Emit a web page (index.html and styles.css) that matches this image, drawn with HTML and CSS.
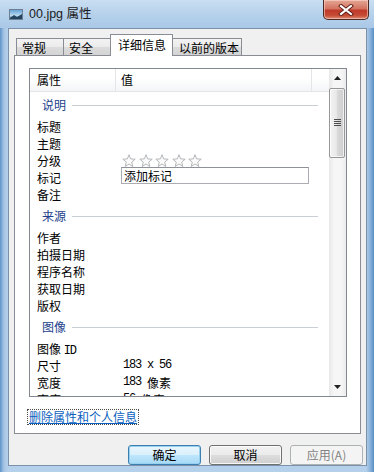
FILE: index.html
```html
<!DOCTYPE html>
<html lang="zh-CN">
<head>
<meta charset="utf-8">
<title>00.jpg 属性</title>
<link rel="stylesheet" href="styles.css">
</head>
<body>
<div class="window">
  <div class="titlebar">
    <svg class="appicon" width="14" height="11" viewBox="0 0 14 11">
      <defs>
        <linearGradient id="sky" x1="0" y1="0" x2="0" y2="1">
          <stop offset="0" stop-color="#5e9fd6"/>
          <stop offset="0.6" stop-color="#b9d9f0"/>
          <stop offset="1" stop-color="#2f5a7e"/>
        </linearGradient>
      </defs>
      <rect x="0.5" y="0.5" width="13" height="10" fill="url(#sky)" stroke="#6d7f90"/>
      <path d="M1 9 L5 6 L8 8 L13 5 L13 10 L1 10 Z" fill="#24455f"/>
    </svg>
    <span class="title">00.jpg 属性</span>
    <div class="close">
      <svg width="16" height="12" viewBox="0 0 16 12">
        <path d="M3 2 L13 10 M13 2 L3 10" stroke="#5a1a12" stroke-width="4" stroke-linecap="square"/>
        <path d="M3 2 L13 10 M13 2 L3 10" stroke="#ffffff" stroke-width="2.2" stroke-linecap="square"/>
      </svg>
    </div>
  </div>
  <div class="client">
    <div class="tabs">
      <div class="tab t1">常规</div>
      <div class="tab t2">安全</div>
      <div class="tab t3 active">详细信息</div>
      <div class="tab t4">以前的版本</div>
    </div>
    <div class="panel">
      <div class="list">
        <div class="list-body">
          <div class="header">
            <div class="hcol c1">属性</div>
            <div class="hcol c2">值</div>
            <div class="hcol c3"></div>
          </div>
          <div class="group"><span>说明</span><i></i></div>
          <div class="row"><div class="k">标题</div><div class="v"></div></div>
          <div class="row"><div class="k">主题</div><div class="v"></div></div>
          <div class="row"><div class="k">分级</div><div class="v stars">
            <svg class="star" width="14" height="13" viewBox="0 0 14 13"><polygon points="7,0.7 8.6,4.9 13.2,5.2 9.7,8.1 10.8,12.5 7,10 3.2,12.5 4.3,8.1 0.8,5.2 5.4,4.9"/></svg>
            <svg class="star" width="14" height="13" viewBox="0 0 14 13"><polygon points="7,0.7 8.6,4.9 13.2,5.2 9.7,8.1 10.8,12.5 7,10 3.2,12.5 4.3,8.1 0.8,5.2 5.4,4.9"/></svg>
            <svg class="star" width="14" height="13" viewBox="0 0 14 13"><polygon points="7,0.7 8.6,4.9 13.2,5.2 9.7,8.1 10.8,12.5 7,10 3.2,12.5 4.3,8.1 0.8,5.2 5.4,4.9"/></svg>
            <svg class="star" width="14" height="13" viewBox="0 0 14 13"><polygon points="7,0.7 8.6,4.9 13.2,5.2 9.7,8.1 10.8,12.5 7,10 3.2,12.5 4.3,8.1 0.8,5.2 5.4,4.9"/></svg>
            <svg class="star" width="14" height="13" viewBox="0 0 14 13"><polygon points="7,0.7 8.6,4.9 13.2,5.2 9.7,8.1 10.8,12.5 7,10 3.2,12.5 4.3,8.1 0.8,5.2 5.4,4.9"/></svg>
          </div></div>
          <div class="row"><div class="k">标记</div><div class="v edit">添加标记</div></div>
          <div class="row"><div class="k">备注</div><div class="v"></div></div>
          <div class="group"><span>来源</span><i></i></div>
          <div class="row"><div class="k">作者</div><div class="v"></div></div>
          <div class="row"><div class="k">拍摄日期</div><div class="v"></div></div>
          <div class="row"><div class="k">程序名称</div><div class="v"></div></div>
          <div class="row"><div class="k">获取日期</div><div class="v"></div></div>
          <div class="row"><div class="k">版权</div><div class="v"></div></div>
          <div class="group"><span>图像</span><i></i></div>
          <div class="row"><div class="k">图像 <span class="mono">ID</span></div><div class="v"></div></div>
          <div class="row"><div class="k">尺寸</div><div class="v"><span class="mono">183 x 56</span></div></div>
          <div class="row"><div class="k">宽度</div><div class="v"><span class="mono">183 </span>像素</div></div>
          <div class="row"><div class="k">高度</div><div class="v"><span class="mono">56 </span>像素</div></div>
        </div>
        <div class="scrollbar">
          <div class="sb-btn"><svg width="7" height="4" viewBox="0 0 7 4"><path d="M3.5 0 L7 4 L0 4 Z" fill="#222"/></svg></div>
          <div class="thumb"><span class="grip"></span></div>
          <div class="track"></div>
          <div class="sb-btn"><svg width="7" height="4" viewBox="0 0 7 4"><path d="M0 0 L7 0 L3.5 4 Z" fill="#222"/></svg></div>
        </div>
      </div>
      <div class="linkline"><a class="link" href="#">删除属性和个人信息</a></div>
    </div>
    <div class="buttons">
      <button class="btn default">确定</button>
      <button class="btn">取消</button>
      <button class="btn disabled">应用(A)</button>
    </div>
  </div>
</div>
</body>
</html>
```
FILE: styles.css
```css
* { box-sizing: border-box; }
html, body { margin: 0; padding: 0; }
body {
  width: 374px;
  height: 472px;
  overflow: hidden;
  font-family: "Noto Sans CJK SC", sans-serif;
  font-size: 12px;
  color: #000;
}
.window {
  width: 374px;
  height: 472px;
  display: flex;
  flex-direction: column;
  background:
    linear-gradient(to right, #5f93c8 0px, #a6c6e5 4px, #b4d0ea 8px, #b4d0ea 366px, #8cb4dc 370px, #5a8fc6 374px);
}
.titlebar {
  height: 28px;
  display: flex;
  align-items: flex-start;
  background: linear-gradient(to bottom, #c9def1 0%, #b3cfea 60%, #aac9e7 100%);
  position: relative;
}
.appicon {
  margin: 9px 0 0 9px;
  flex: none;
}
.title {
  margin: 6px 0 0 6px;
  font-family: "Liberation Sans", "Noto Sans CJK SC", sans-serif;
  font-size: 12.5px;
  line-height: 16px;
  color: #1b1b1b;
}
.close {
  margin-left: auto;
  margin-right: 5px;
  width: 46px;
  height: 20px;
  border: 1px solid #4b2a26;
  border-top: none;
  border-radius: 0 0 5px 5px;
  background: linear-gradient(to bottom, #e5a795 0%, #d47462 45%, #c0392a 55%, #c44a34 80%, #de8a70 100%);
  box-shadow: inset 0 0 0 1px rgba(255,220,210,0.55);
  display: flex;
  align-items: center;
  justify-content: center;
}
.client {
  margin: 0 7px 6px 8px;
  height: 439px;
  border: 1px solid #7b91aa;
  background: #f0f0f0;
  display: flex;
  flex-direction: column;
}
.tabs {
  height: 26px;
  display: flex;
  align-items: flex-end;
  padding-left: 7px;
  position: relative;
  z-index: 2;
}
.tab {
  height: 17px;
  border: 1px solid #898c95;
  border-bottom: none;
  background: linear-gradient(to bottom, #f3f3f3 0%, #ebebeb 50%, #dcdcdc 51%, #d4d4d4 100%);
  padding-left: 5px;
  line-height: 17px;
  white-space: nowrap;
  color: #000;
}
.t1 { width: 48px; }
.t2 { width: 48px; margin-left: -1px; }
.t3 { width: 63px; margin-left: -1px; }
.t4 { width: 70px; margin-left: -1px; padding-left: 6px; }
.tab.active {
  height: 22px;
  margin-bottom: -1px;
  background: #fff;
  padding-left: 7px;
  line-height: 19px;
  position: relative;
  z-index: 3;
}
.panel {
  margin-left: 5px;
  width: 347px;
  height: 379px;
  border: 1px solid #898c95;
  background: #fff;
  padding: 12px 0 0 14px;
  position: relative;
  z-index: 1;
}
.list {
  width: 318px;
  height: 329px;
  border: 1px solid #828790;
  display: flex;
  overflow: hidden;
}
.list-body {
  width: 299px;
  height: 327px;
  overflow: hidden;
  flex: none;
}
.header {
  height: 23px;
  display: flex;
  background: linear-gradient(to bottom, #ffffff 0%, #ffffff 40%, #f4f5f7 100%);
  border-bottom: 1px solid #e3e5e8;
}
.hcol {
  line-height: 22px;
  border-right: 1px solid #e3e5e8;
  flex: none;
}
.c1 { width: 86px; padding-left: 7px; }
.c2 { width: 196px; padding-left: 5px; }
.c3 { flex: 1; border-right: none; }
.group {
  height: 26px;
  display: flex;
  align-items: center;
  padding-left: 12px;
  color: #233f8c;
}
.group span { line-height: 16px; }
.group i {
  display: block;
  height: 1px;
  width: 246px;
  margin-left: 6px;
  margin-top: 1px;
  background: #c9ced6;
}
.row {
  height: 17px;
  display: grid;
  grid-template-columns: 91px 208px;
  align-items: center;
  white-space: nowrap;
}
.k {
  padding-left: 7px;
  line-height: 17px;
}
.v {
  padding-left: 2px;
  line-height: 17px;
  height: 17px;
  display: flex;
  align-items: center;
}
.v.edit {
  width: 188px;
  align-self: start;
  margin-top: -2px;
  border: 1px solid #abadb3;
  border-top-color: #8e9298;
  padding-left: 2px;
  line-height: 15px;
  background: #fff;
}
.mono {
  font-family: "Liberation Mono", monospace;
  font-size: 12px;
  letter-spacing: -1.2px;
  white-space: pre;
}
.stars { gap: 2.5px; padding-left: 1px; }
.star polygon {
  fill: #fbfbfb;
  stroke: #b4b6b9;
  stroke-width: 1;
  stroke-linejoin: round;
}
.scrollbar {
  width: 17px;
  height: 327px;
  flex: none;
  display: flex;
  flex-direction: column;
  background: linear-gradient(to right, #e8e8e8 0%, #f6f6f6 30%, #f6f6f6 70%, #ececec 100%);
}
.sb-btn {
  height: 18px;
  display: flex;
  align-items: center;
  justify-content: center;
  flex: none;
}
.thumb {
  height: 70px;
  margin: 1px 1px 0 0;
  border: 1px solid #979797;
  border-radius: 2px;
  background: linear-gradient(to right, #f3f3f3 0%, #e9e9e9 45%, #d8d8d8 55%, #cfcfcf 100%);
  box-shadow: inset 0 0 0 1px rgba(255,255,255,0.7);
  display: flex;
  align-items: center;
  justify-content: center;
  flex: none;
}
.grip {
  width: 7px;
  height: 7px;
  background: repeating-linear-gradient(to bottom, #4e4e4e 0px, #4e4e4e 1px, transparent 1px, transparent 2px);
}
.track { flex: 1; }
.linkline {
  margin-top: 11px;
  height: 14px;
  margin-left: -1px;
}
.link {
  color: #0b5fc0;
  text-decoration: underline;
  line-height: 14px;
  outline: 1px dotted #4a4a4a;
  outline-offset: 0;
  padding: 0 1px;
  display: inline-block;
}
.buttons {
  margin-top: 11px;
  display: flex;
  justify-content: flex-end;
  gap: 8px;
  padding-right: 3px;
}
.btn {
  width: 73px;
  height: 20px;
  padding: 0;
  font-family: "Noto Sans CJK SC", sans-serif;
  font-size: 12px;
  line-height: 18px;
  color: #000;
  border: 1px solid #707070;
  border-radius: 3px;
  background: linear-gradient(to bottom, #f2f2f2 0%, #ebebeb 50%, #dddddd 51%, #cfcfcf 100%);
  box-shadow: inset 0 0 0 1px rgba(255,255,255,0.8);
}
.btn.default {
  border-color: #3c7fb1;
  box-shadow: inset 0 0 0 1px #98d1ef;
  background: linear-gradient(to bottom, #eaf6fd 0%, #d9f0fc 50%, #bee6fd 51%, #a7d9f5 100%);
}
.btn.disabled {
  border-color: #adb2b5;
  background: #f4f4f4;
  color: #838383;
  box-shadow: none;
}
```
